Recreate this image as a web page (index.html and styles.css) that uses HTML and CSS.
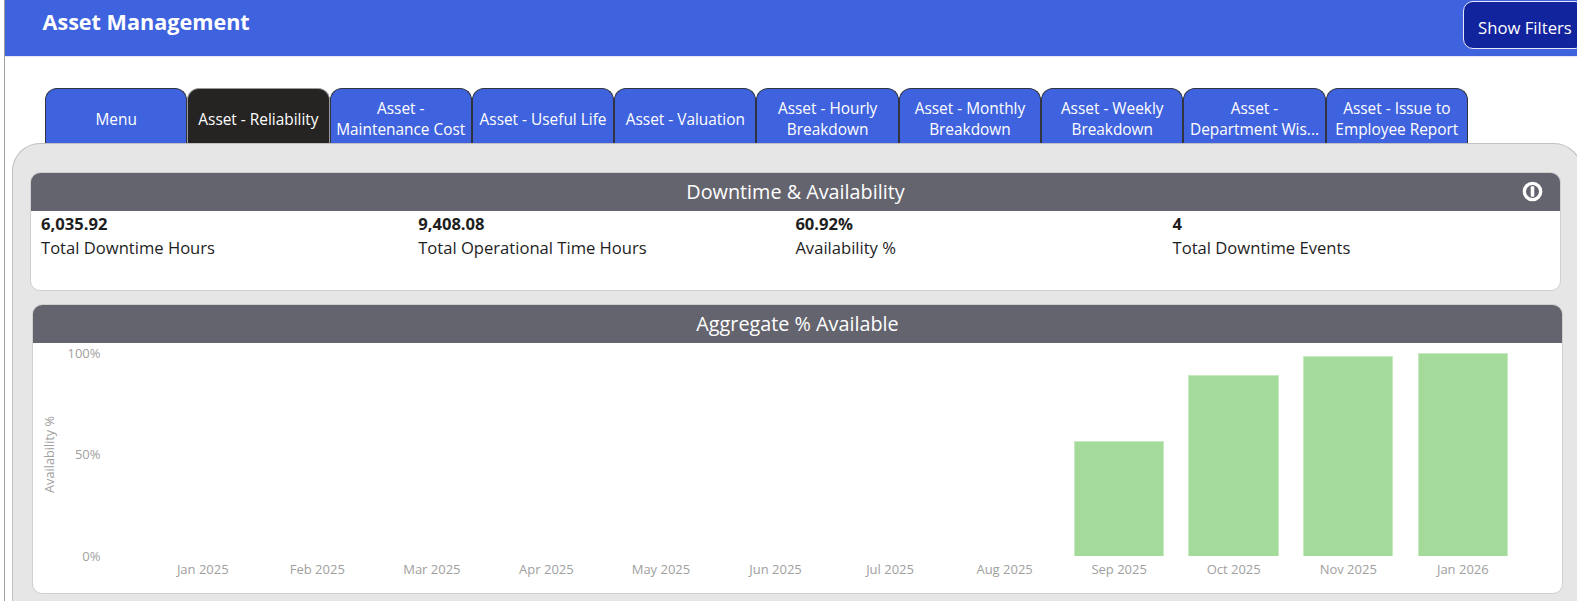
FILE: index.html
```html
<!DOCTYPE html>
<html lang="en">
<head>
<meta charset="utf-8">
<title>Asset Management</title>
<link rel="stylesheet" href="styles.css">
</head>
<body>
<div class="app">
  <header class="topbar">
    <h1 class="title">Asset Management</h1>
    <button class="filters">Show Filters</button>
  </header>
  <nav class="tabs">
    <a class="tab">Menu</a>
    <a class="tab active">Asset - Reliability</a>
    <a class="tab">Asset -<br>Maintenance Cost</a>
    <a class="tab">Asset - Useful Life</a>
    <a class="tab">Asset - Valuation</a>
    <a class="tab">Asset - Hourly<br>Breakdown</a>
    <a class="tab">Asset - Monthly<br>Breakdown</a>
    <a class="tab">Asset - Weekly<br>Breakdown</a>
    <a class="tab">Asset -<br>Department Wis...</a>
    <a class="tab">Asset - Issue to<br>Employee Report</a>
  </nav>
  <main class="panel">
    <section class="card kpi-card">
      <div class="card-head">Downtime &amp; Availability
        <svg class="info" viewBox="0 0 20 20" aria-hidden="true">
          <circle cx="10" cy="10" r="7.8" fill="none" stroke="#fff" stroke-width="3.2"/>
          <rect x="8.3" y="5" width="3.4" height="10" rx="1" fill="#fff"/>
        </svg>
      </div>
      <div class="kpis">
        <div class="kpi"><strong>6,035.92</strong><span>Total Downtime Hours</span></div>
        <div class="kpi"><strong>9,408.08</strong><span>Total Operational Time Hours</span></div>
        <div class="kpi"><strong>60.92%</strong><span>Availability %</span></div>
        <div class="kpi"><strong>4</strong><span>Total Downtime Events</span></div>
      </div>
    </section>
    <section class="card chart-card">
      <div class="card-head">Aggregate % Available</div>
      <div class="chart">
        <div class="axis-title"><span>Availability %</span></div>
        <div class="y-axis"><span>100%</span><span>50%</span><span>0%</span></div>
        <div class="plot">
          <div class="col"><span class="lbl">Jan 2025</span></div>
          <div class="col"><span class="lbl">Feb 2025</span></div>
          <div class="col"><span class="lbl">Mar 2025</span></div>
          <div class="col"><span class="lbl">Apr 2025</span></div>
          <div class="col"><span class="lbl">May 2025</span></div>
          <div class="col"><span class="lbl">Jun 2025</span></div>
          <div class="col"><span class="lbl">Jul 2025</span></div>
          <div class="col"><span class="lbl">Aug 2025</span></div>
          <div class="col"><div class="bar" style="height:115px"></div><span class="lbl">Sep 2025</span></div>
          <div class="col"><div class="bar" style="height:181px"></div><span class="lbl">Oct 2025</span></div>
          <div class="col"><div class="bar" style="height:200px"></div><span class="lbl">Nov 2025</span></div>
          <div class="col"><div class="bar" style="height:203px"></div><span class="lbl">Jan 2026</span></div>
        </div>
      </div>
    </section>
  </main>
</div>
</body>
</html>
```

FILE: styles.css
```css
* { box-sizing: border-box; }
html, body { margin: 0; height: 100%; overflow: hidden; background: #fff; }
body { padding-left: 4px; font-family: "Open Sans", "Noto Sans", sans-serif; color: #252423; }
.app { border-left: 1px solid #a0a0a0; height: 601px; width: 1573px; overflow: hidden; }

.topbar { height: 57px; background: #3f63de; display: flex; justify-content: space-between; align-items: flex-start; border-bottom: 1px solid #e4e8f6; }
.title { margin: 8px 0 0 37.5px; font-size: 21.6px; line-height: 28px; font-weight: 700; color: #fff; }
.filters { flex: none; width: 122px; height: 48px; margin: 1px -8px 0 0; padding: 4px 0 0 14px; text-align: left; background: #12239e; color: #fff; border: 1px solid #e6e9f5; border-radius: 10px; font: 16.7px "Open Sans", sans-serif; white-space: nowrap; }

.tabs { display: flex; height: 86px; padding: 31px 0 0 40px; }
.tab { flex: none; width: 142.3px; height: 55px; padding-top: 6px; display: flex; align-items: center; justify-content: center; text-align: center; background: #3f63de; color: #fff; border: 1px solid #30343f; border-bottom: 0; border-radius: 12px 12px 0 0; font-size: 15.4px; line-height: 21px; font-weight: 500; white-space: nowrap; }
.tab.active { background: #252423; border-color: #9a9a9a; }

.panel { margin-left: 7px; height: 480px; width: 1570px; background: #e6e6e6; border: 1px solid #c0c0c0; border-bottom: 0; border-radius: 28px 28px 0 0; padding: 28px 16px 0 17px; }
.card { background: #fff; border: 1px solid #cfcfcf; border-radius: 10px; overflow: hidden; }
.card-head { position: relative; height: 37.5px; background: #64646e; color: #fff; text-align: center; font-size: 19.8px; line-height: 37.5px; }
.info { position: absolute; right: 17px; top: 8px; width: 21px; height: 21px; }

.kpi-card { height: 119px; width: 1531px; }
.kpis { display: grid; grid-template-columns: repeat(4, 377.2px); padding: 1px 0 0 10px; }
.kpi { display: flex; flex-direction: column; font-size: 16.6px; line-height: 24px; color: #1e1e1e; }
.kpi strong { font-weight: 700; }

.chart-card { height: 290px; width: 1531px; margin: 13px 0 0 2px; }
.chart { display: flex; height: 250.5px; font-size: 13px; color: #a0a0a0; }
.axis-title { width: 24.5px; display: flex; justify-content: flex-end; align-items: center; padding-bottom: 26px; }
.axis-title span { writing-mode: vertical-rl; transform: rotate(180deg); font-size: 12.7px; }
.y-axis { width: 43px; height: 220px; margin-top: 2px; display: flex; flex-direction: column; justify-content: space-between; align-items: flex-end; line-height: 17px; }
.plot { display: grid; grid-template-columns: repeat(12, 114.55px); margin-left: 45px; height: 250.5px; }
.col { display: flex; flex-direction: column; justify-content: flex-end; align-items: center; }
.bar { width: 90.5px; background: #a4da9a; border: 1px solid #c6e9c0; border-bottom: 0; }
.lbl { height: 37px; padding-top: 4px; line-height: 18px; white-space: nowrap; }
```
